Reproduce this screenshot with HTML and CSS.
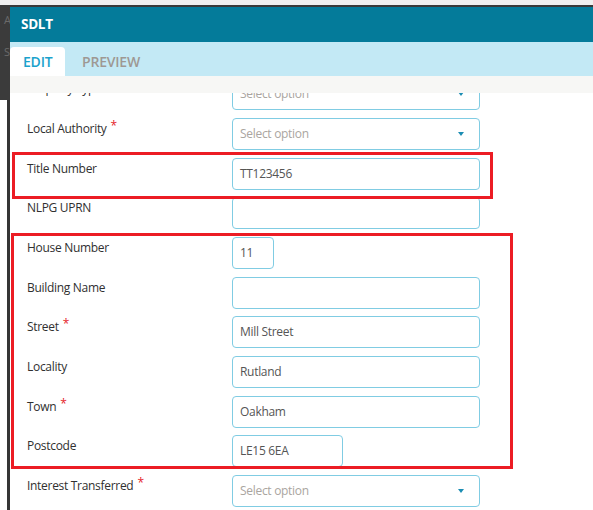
FILE: index.html
```html
<!DOCTYPE html>
<html lang="en">
<head>
<meta charset="utf-8">
<title>SDLT</title>
<link rel="stylesheet" href="styles.css">
</head>
<body>
<div class="screen">
  <div class="topline"></div>
  <div class="main">
    <div class="side">
      <div class="side-top"><span class="bg-letter">A</span><span class="bg-letter">S</span></div>
      <div class="side-bottom"></div>
    </div>
    <div class="modal">
      <header class="modal-header">SDLT</header>
      <nav class="tabs">
        <span class="tab tab-active">EDIT</span>
        <span class="tab">PREVIEW</span>
      </nav>
      <div class="strip"></div>
      <div class="content">
        <div class="form">
          <div class="row"><div class="label">Property Type</div><div class="field select"><span class="placeholder">Select option</span><span class="caret"></span></div></div>
          <div class="row"><div class="label">Local Authority<span class="req">*</span></div><div class="field select"><span class="placeholder">Select option</span><span class="caret"></span></div></div>
          <div class="row"><div class="label">Title Number</div><div class="field">TT123456</div></div>
          <div class="row"><div class="label">NLPG UPRN</div><div class="field"></div></div>
          <div class="row"><div class="label">House Number</div><div class="field field-xs">11</div></div>
          <div class="row"><div class="label">Building Name</div><div class="field"></div></div>
          <div class="row"><div class="label">Street<span class="req">*</span></div><div class="field">Mill Street</div></div>
          <div class="row"><div class="label">Locality</div><div class="field">Rutland</div></div>
          <div class="row"><div class="label">Town<span class="req">*</span></div><div class="field">Oakham</div></div>
          <div class="row"><div class="label">Postcode</div><div class="field field-sm">LE15 6EA</div></div>
          <div class="row"><div class="label">Interest Transferred<span class="req">*</span></div><div class="field select"><span class="placeholder">Select option</span><span class="caret"></span></div></div>
        </div>
      </div>
    </div>
  </div>
  <div class="annot annot-title"></div>
  <div class="annot annot-address"></div>
</div>
</body>
</html>
```

FILE: styles.css
```css
* { box-sizing: border-box; }

html, body {
  margin: 0;
  padding: 0;
  background: #ffffff;
}

body {
  font-family: "Open Sans", "Noto Sans", "Liberation Sans", sans-serif;
  width: 593px;
  height: 510px;
  overflow: hidden;
}

.screen {
  position: relative;
  width: 593px;
  height: 510px;
  display: flex;
  flex-direction: column;
  overflow: hidden;
}

.topline {
  height: 7px;
  flex: none;
  background: #f0f0f0;
  border-bottom: 2px solid #3a3a3a;
}

.main {
  flex: 1;
  display: flex;
  min-height: 0;
}

.side {
  width: 10px;
  flex: none;
  display: flex;
  flex-direction: column;
}

.side-top {
  height: 93px;
  background: #3b3b3b;
  display: flex;
  flex-direction: column;
  gap: 18px;
  padding: 6px 0 0 4px;
  overflow: hidden;
}

.bg-letter {
  color: #6a6a6a;
  font-size: 11px;
  line-height: 14px;
}

.side-bottom {
  flex: 1;
  background: #ffffff;
  border-right: 3px solid #353535;
}

.modal {
  flex: 1;
  display: flex;
  flex-direction: column;
  min-width: 0;
}

.modal-header {
  height: 35px;
  flex: none;
  background: #047b9a;
  color: #ffffff;
  font-weight: 700;
  font-size: 13.5px;
  letter-spacing: -0.3px;
  line-height: 35px;
  padding-left: 11px;
}

.tabs {
  height: 34px;
  flex: none;
  background: #c3e9f5;
  display: flex;
  align-items: flex-end;
  gap: 4px;
}

.tab {
  height: 29px;
  line-height: 29px;
  padding: 0 13px;
  font-size: 14px;
  font-weight: 600;
  letter-spacing: -0.2px;
  color: #9e9893;
  border-radius: 4px 4px 0 0;
}

.tab-active {
  background: #ffffff;
  color: #1ba2cc;
  padding: 0 12px 0 13px;
  width: 55px;
}

.strip {
  height: 17px;
  flex: none;
  background: #f7f7f5;
  position: relative;
  z-index: 1;
}

.content {
  flex: 1;
  overflow: hidden;
  min-height: 0;
}

.form {
  margin-top: -14.7px;
  padding-left: 16px;
}

.row {
  display: grid;
  grid-template-columns: 206px 248px;
  height: 39.67px;
}

.label {
  font-size: 12px;
  letter-spacing: -0.3px;
  line-height: 20px;
  padding-top: 1px;
  padding-left: 1px;
  color: #303030;
}

.req {
  color: #e5232b;
  font-size: 12px;
  margin-left: 4px;
  position: relative;
  top: -3px;
}

.field {
  height: 32px;
  border: 1px solid #80cce3;
  border-radius: 4px;
  padding: 0 7px;
  font-size: 12px;
  letter-spacing: -0.3px;
  line-height: 30px;
  color: #555555;
  background: #ffffff;
  white-space: nowrap;
}

.field-xs { width: 42px; }
.field-sm { width: 111px; }

.select {
  display: flex;
  align-items: center;
  justify-content: space-between;
  padding-right: 15px;
}

.placeholder {
  color: #aaa5a0;
}

.caret {
  width: 0;
  height: 0;
  border-left: 3.5px solid transparent;
  border-right: 3.5px solid transparent;
  border-top: 4px solid #1b8db3;
}

.annot {
  position: absolute;
  border: 3px solid #ec1c24;
  pointer-events: none;
}

.annot-title {
  left: 12px;
  top: 152px;
  width: 481px;
  height: 47px;
}

.annot-address {
  left: 11px;
  top: 233px;
  width: 502px;
  height: 236px;
  border-width: 3.5px;
}
```
